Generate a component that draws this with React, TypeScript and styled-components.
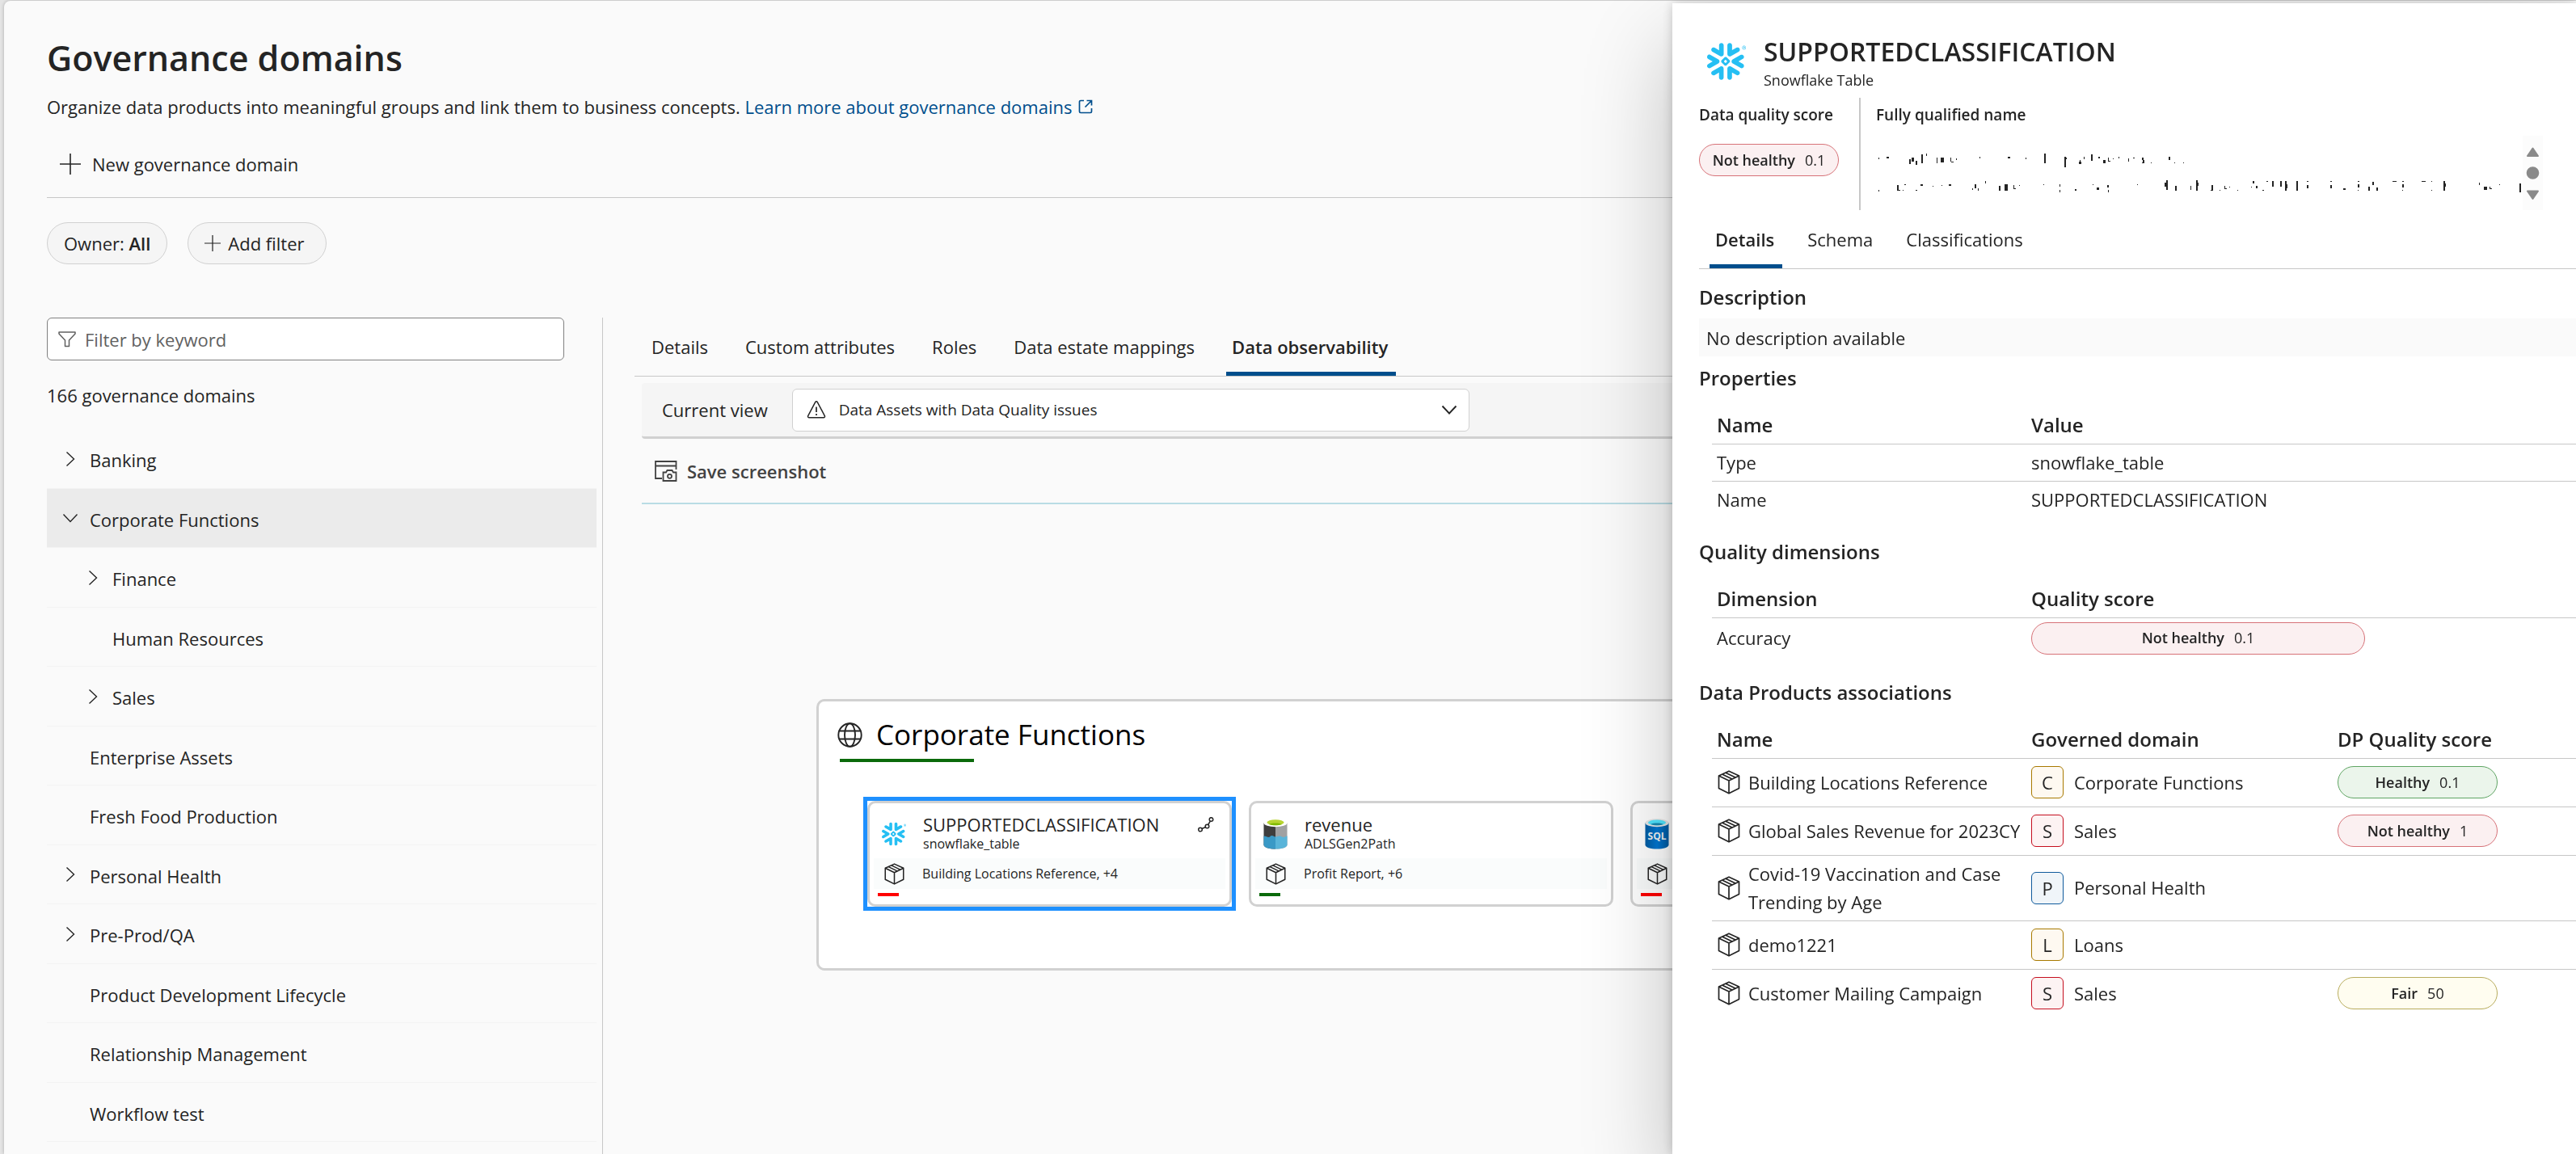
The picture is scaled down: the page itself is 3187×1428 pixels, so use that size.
import React from "react";
import styled, { createGlobalStyle } from "styled-components";
import { SiSnowflake } from "react-icons/si";

const ink = "#242424";
const line = "#c7c7c7";
const brand = "#004e8c";
const snow = "#25bff3";

const GlobalStyle = createGlobalStyle`
  * { box-sizing: border-box; }
  body {
    margin: 0;
    background: #e4e4e4;
    color: ${ink};
    font-family: "Open Sans", "Noto Sans", sans-serif;
    font-size: 22px;
    line-height: 32px;
    overflow: hidden;
  }
  button, input, select { font: inherit; color: inherit; }
  button { background: none; border: 0; padding: 0; cursor: pointer; }
  h1, h2, h3, p, ul { margin: 0; padding: 0; }
  svg { display: block; flex: none; }
`;

/* ---------- icons ---------- */

const PlusIcon = ({ size }: { size: number }) => (
  <svg width={size} height={size} viewBox="0 0 26 26" fill="none" stroke={ink} strokeWidth="1.6">
    <path d="M13 0v26M0 13h26" />
  </svg>
);

const OpenIcon = () => (
  <svg width="18" height="18" viewBox="0 0 18 18" fill="none" stroke={brand} strokeWidth="1.7">
    <path d="M7 1.5H3A1.5 1.5 0 0 0 1.5 3v12A1.5 1.5 0 0 0 3 16.5h12a1.5 1.5 0 0 0 1.5-1.5v-4M10.5 1.5h6v6M16.5 1.5l-8 8" />
  </svg>
);

const FunnelIcon = () => (
  <svg width="22" height="20" viewBox="0 0 22 20" fill="none" stroke="#616161" strokeWidth="1.5">
    <path d="M1 1h20v2l-7.5 8v7.5h-5V11L1 3z" strokeLinejoin="round" />
  </svg>
);

const ChevronIcon = ({ open, stroke = 1.4 }: { open?: boolean; stroke?: number }) => (
  <svg width="20" height="20" viewBox="0 0 20 20" fill="none" stroke={ink} strokeWidth={stroke}>
    <path d={open ? "M1.5 5.5 10 14.5l8.5-9" : "M5.5 1.5 14.5 10l-9 8.5"} />
  </svg>
);

const WarningIcon = () => (
  <svg width="24" height="24" viewBox="0 0 24 24" fill="none" stroke={ink} strokeWidth="1.5" strokeLinejoin="round">
    <path d="M10.7 2.6a1.5 1.5 0 0 1 2.6 0l9 17a1.5 1.5 0 0 1-1.3 2.2H3a1.5 1.5 0 0 1-1.3-2.2z" />
    <path d="M12 8.5v6.5M12 17v2" strokeWidth="1.7" />
  </svg>
);

const ScreenshotIcon = () => (
  <svg width="28" height="26" viewBox="0 0 28 26" fill="none" stroke="#424242" strokeWidth="1.8">
    <path d="M9 22H1V1h25.500v10M1 6.500h25.500" />
    <path d="M10.500 14.500h3.500l1.500-2.500h6l1.500 2.500h3.500V25h-16z" />
    <circle cx="18.500" cy="19.300" r="2.500" />
  </svg>
);

const GlobeIcon = () => (
  <svg width="31" height="31" viewBox="0 0 31 31" fill="none" stroke={ink} strokeWidth="1.9">
    <circle cx="15.500" cy="15.500" r="14.200" />
    <ellipse cx="15.500" cy="15.500" rx="6.500" ry="14.200" />
    <path d="M2.500 10.500h26M2.500 20.500h26" />
  </svg>
);

const BoxIcon = ({ size = 30 }: { size?: number }) => (
  <svg width={size} height={size} viewBox="0 0 30 30" fill="none" stroke={ink} strokeWidth="1.7" strokeLinejoin="round">
    <path d="M15 1.200 27.500 7v15.500L15 28.800 2.500 22.500V7z" />
    <path d="M2.500 7 15 13l12.500-6M15 13v15.800M11 3.200 23 9M7 5.200 19 11" />
  </svg>
);

const LineageIcon = () => (
  <svg width="20" height="19" viewBox="0 0 20 19" fill="none" stroke={ink} strokeWidth="1.5">
    <circle cx="3" cy="15.500" r="2.300" />
    <circle cx="11.500" cy="11.500" r="2.300" />
    <circle cx="16.500" cy="3" r="2.300" />
    <path d="m5 14.500 4.400-2M12.700 9.500l2.600-4.400" />
  </svg>
);

const LakeIcon = () => (
  <svg width="30" height="38" viewBox="0 0 30 38">
    <path d="M.5 5v27.500c0 3 6.500 5 14.500 5V5z" fill="#3e3e3e" />
    <path d="M29.500 5v27.500c0 3-6.500 5-14.500 5V5z" fill="#a0a1a2" />
    <path d="M.5 21.500c3 0 4 1.500 6 1.500s2-2 4-2 2.500 1.500 4.500 1.500v15c-8 0-14.500-2-14.500-5z" fill="#3999c6" />
    <path d="M29.500 21.500c-2 0-2.500 1.500-4.500 1.500s-3-1.500-5-1.500-3 1-5 1v15c8 0 14.500-2 14.500-5z" fill="#59b4d9" />
    <ellipse cx="15" cy="5.300" rx="14.500" ry="5" fill="#fff" />
    <ellipse cx="15" cy="4.700" rx="10.500" ry="3.500" fill="#b8d432" />
    <path d="M7 7c2-1.300 5-1.600 8-1.600s6 .3 8 1.600c-2 1-5 1.300-8 1.300S9 8 7 7z" fill="#7fba00" />
  </svg>
);

const SqlIcon = () => (
  <svg width="30" height="38" viewBox="0 0 30 38">
    <defs>
      <linearGradient id="sql-body" x1="0" x2="1">
        <stop offset="0" stopColor="#005ba1" />
        <stop offset="0.500" stopColor="#0078d4" />
        <stop offset="1" stopColor="#005ba1" />
      </linearGradient>
    </defs>
    <path d="M.5 5v27.500c0 3 6.500 5 14.500 5s14.500-2 14.500-5V5z" fill="url(#sql-body)" />
    <ellipse cx="15" cy="5.300" rx="14.500" ry="5" fill="#e8e8e8" />
    <ellipse cx="15" cy="4.900" rx="11" ry="3.500" fill="#50e6ff" />
    <path d="M7 7c2-1.300 5-1.600 8-1.600s6 .3 8 1.600c-2 1-5 1.300-8 1.300S9 8 7 7z" fill="#198ab3" />
    <text x="15" y="26" textAnchor="middle" fontSize="12" fontWeight="700" fill="#f2f2f2">SQL</text>
  </svg>
);

/* ---------- page shell ---------- */

const Shell = styled.div`
  padding: 1px 0 0 5px;
  height: 100vh;
`;

const Page = styled.main`
  display: flex;
  flex-direction: column;
  height: 100%;
  padding: 41px 0 0 53px;
  background: #fafafa;
  border-radius: 8px 0 0 0;
  box-shadow: 0 0 4px rgba(0, 0, 0, 0.24);
  overflow: hidden;
`;

const PageTitle = styled.h1`
  font-size: 43px;
  font-weight: 600;
  line-height: 60px;
`;

const Intro = styled.p`
  margin-top: 14px;
`;

const Link = styled.a`
  display: inline-flex;
  align-items: center;
  gap: 8px;
  color: ${brand};
  text-decoration: none;
`;

const CommandBar = styled.div`
  display: flex;
  margin-top: 13px;
  height: 84px;
  padding-left: 16px;
  border-bottom: 1px solid ${line};
`;

const Command = styled.button`
  display: flex;
  align-items: center;
  gap: 14px;
`;

const Filters = styled.div`
  display: flex;
  gap: 25px;
  margin-top: 30px;
`;

const FilterPill = styled.button<{ $add?: boolean }>`
  display: flex;
  align-items: center;
  gap: 9px;
  height: 52px;
  padding: 0 ${(p) => (p.$add ? 26 : 20)}px 0 20px;
  border: 1px solid #d1d1d1;
  border-radius: 26px;
  background: #f5f5f5;
  white-space: pre;
`;

const Body = styled.div`
  display: flex;
  flex: 1;
  min-height: 0;
  margin-top: 66px;
`;

/* ---------- domain tree ---------- */

const Sidebar = styled.nav`
  flex: none;
  width: 688px;
  padding-right: 7px;
  border-right: 1px solid ${line};
`;

const SearchBox = styled.label`
  display: flex;
  align-items: center;
  gap: 9px;
  width: 640px;
  height: 53px;
  padding: 0 13px;
  border: 1px solid #808080;
  border-radius: 6px;
  background: #fff;
`;

const SearchInput = styled.input`
  flex: 1;
  border: 0;
  outline: 0;
  background: transparent;
  &::placeholder { color: #616161; opacity: 1; }
`;

const Count = styled.p`
  margin: 27px 0 26px;
`;

const Tree = styled.ul`
  list-style: none;
`;

const TreeItem = styled.li`
  height: 74px;
  border-bottom: 1px solid #f3f3f3;
  &:nth-child(even) { height: 73px; }
`;

const TreeButton = styled.button<{ $level: number; $selected?: boolean }>`
  display: flex;
  align-items: center;
  gap: 14px;
  width: 100%;
  height: 100%;
  padding-left: ${(p) => 19 + p.$level * 28}px;
  background: ${(p) => (p.$selected ? "#ebebeb" : "transparent")};
  text-align: left;
`;

const ChevronSlot = styled.span`
  width: 20px;
`;

const TreeLabel = styled.span`
  padding-top: 3px;
`;

/* ---------- observability view ---------- */

const Content = styled.section`
  flex: 1;
  min-width: 0;
  padding-left: 39px;
`;

const TabList = styled.div<{ $inset: number; $gap: number }>`
  display: flex;
  gap: ${(p) => p.$gap}px;
  padding-left: ${(p) => p.$inset}px;
  border-bottom: 1px solid ${line};
`;

const Tab = styled.button<{ $active?: boolean }>`
  height: 72px;
  padding: 4px 10px 0 7px;
  border-bottom: 5px solid transparent;
  border-image: ${(p) =>
    p.$active ? `linear-gradient(${brand}, ${brand}) 5` : "none"};
  font-weight: ${(p) => (p.$active ? 600 : 400)};
`;

const ViewBar = styled.div`
  display: flex;
  align-items: center;
  gap: 30px;
  height: 69px;
  margin: 8px 0 0 9px;
  padding-left: 25px;
  border-bottom: 3px solid #d1d1d1;
  border-radius: 4px 0 0 4px;
  background: #f5f5f5;
`;

const SelectBox = styled.div`
  display: flex;
  align-items: center;
  gap: 16px;
  width: 838px;
  height: 53px;
  padding: 0 14px 0 17px;
  border: 1px solid #d1d1d1;
  border-radius: 6px;
  background: #fff;
`;

const Select = styled.select`
  flex: 1;
  appearance: none;
  border: 0;
  outline: 0;
  background: transparent;
  font-size: 19px;
`;

const Actions = styled.div`
  display: flex;
  height: 81px;
  margin-left: 9px;
  padding-left: 16px;
  border-bottom: 2px solid #b9dce4;
`;

const SaveButton = styled(Command)`
  gap: 12px;
  color: #424242;
  font-weight: 600;
`;

const Group = styled.section`
  margin: 241px 0 0 225px;
  padding: 17px 0 76px 23px;
  border: 3px solid #d1d1d1;
  border-right: 0;
  border-radius: 10px 0 0 10px;
  background: #fff;
`;

const GroupTitle = styled.h2`
  display: flex;
  align-items: center;
  gap: 17px;
  color: #000;
  font-size: 35px;
  font-weight: 400;
  line-height: 48px;
`;

const Health = styled.div<{ $ok?: boolean; $wide?: boolean }>`
  width: ${(p) => (p.$wide ? 166 : 26)}px;
  height: 4px;
  margin: ${(p) => (p.$wide ? "6px 0 0 3px" : "5px 0 0 10px")};
  background: ${(p) => (p.$ok ? "#0b6a0b" : "#ff0000")};
`;

const Cards = styled.div`
  display: flex;
  gap: 21px;
  margin-top: 48px;
  padding-left: 37px;
`;

const CardFrame = styled.div<{ $selected?: boolean }>`
  flex: none;
  width: 451px;
  outline: ${(p) => (p.$selected ? "5px solid #1e90ff" : "none")};
`;

const Card = styled.article`
  height: 131px;
  border: 3px solid #d1d1d1;
  border-radius: 10px;
  background: #fff;
`;

const CardHead = styled.div`
  display: flex;
  align-items: center;
  gap: 21px;
  height: 68px;
  padding: 8px 19px 0 15px;
`;

const CardText = styled.div`
  flex: 1;
  padding-bottom: 4px;
  line-height: 28px;
`;

const CardKind = styled.div`
  font-size: 16px;
  line-height: 20px;
`;

const CardMark = styled.div`
  align-self: flex-start;
  padding-top: 9px;
`;

const CardBand = styled.div`
  display: flex;
  align-items: center;
  gap: 21px;
  height: 38px;
  margin: 0 5px;
  padding-left: 12px;
  background: #fafcfc;
  font-size: 16px;
`;

/* ---------- details drawer ---------- */

const Drawer = styled.aside`
  position: fixed;
  top: 4px;
  right: 0;
  bottom: 0;
  width: 1118px;
  padding: 37px 0 0 33px;
  background: #fff;
  box-shadow: 0 0 13px rgba(0, 0, 0, 0.2), 0 52px 104px rgba(0, 0, 0, 0.24);
`;

const DrawerHead = styled.header`
  display: flex;
  align-items: center;
  gap: 22px;
  padding-left: 10px;
`;

const DrawerTitle = styled.h2`
  font-size: 32px;
  font-weight: 600;
  line-height: 46px;
`;

const DrawerKind = styled.p`
  font-size: 18px;
  line-height: 24px;
`;

const Summary = styled.div`
  display: flex;
  height: 139px;
  margin-top: 10px;
`;

const SummaryScore = styled.div`
  width: 200px;
  padding-top: 7px;
  border-right: 2px solid ${line};
`;

const SummaryName = styled.div`
  padding: 7px 0 0 19px;
`;

const SummaryLabel = styled.h3`
  font-size: 19px;
  font-weight: 600;
  line-height: 28px;
`;

const tones = {
  bad: ["#fbf0f1", "#d77278"],
  good: ["#ebf5eb", "#5fa563"],
  fair: ["#fffdf0", "#b8ac5c"],
};
type Tone = keyof typeof tones;

const Pill = styled.span<{ $tone: Tone; $width: string }>`
  display: flex;
  align-items: center;
  justify-content: center;
  gap: 12px;
  width: ${(p) => p.$width};
  height: 40px;
  border: 1px solid ${(p) => tones[p.$tone][1]};
  border-radius: 20px;
  background: ${(p) => tones[p.$tone][0]};
  font-size: 18px;
`;

const SummaryPill = styled(Pill)`
  margin-top: 22px;
`;

const NameScroller = styled.div`
  display: flex;
  margin-top: 12px;
`;

const Sections = styled.div`
  padding-top: 18px;
`;

const Section = styled.section`
  & + & { margin-top: 25px; }
`;

const SectionTitle = styled.h3`
  font-size: 24px;
  font-weight: 600;
  line-height: 34px;
`;

const Description = styled.p`
  height: 47px;
  margin: 9px 0 10px;
  padding-left: 9px;
  background: #fafafa;
  line-height: 49px;
`;

const Table = styled.table`
  width: calc(100% - 16px);
  margin: 17px 0 0 16px;
  border-collapse: collapse;
  table-layout: fixed;
  line-height: 35px;
  th, td { padding: 0 0 0 6px; text-align: left; }
  th { height: 47px; padding-top: 1px; font-size: 24px; font-weight: 600; }
  tr + tr td { border-top: 1px solid ${line}; }
  thead { border-bottom: 1px solid ${line}; }
`;

const Col = styled.col<{ $width?: number }>`
  width: ${(p) => (p.$width ? `${p.$width}px` : "auto")};
`;

const Row = styled.tr<{ $height: number }>`
  height: ${(p) => p.$height}px;
`;

const Cell = styled.div<{ $gap: number }>`
  display: flex;
  align-items: center;
  gap: ${(p) => p.$gap}px;
  padding: 5px 0;
`;

const tiles: Record<string, [string, string]> = {
  gold: ["#fef9f1", "#a87900"],
  red: ["#fdf3f3", "#c50f1f"],
  blue: ["#f0f5f9", "#0f5a9c"],
};

const Tile = styled.span<{ $tone: string }>`
  flex: none;
  width: 40px;
  height: 40px;
  border: 1px solid ${(p) => tiles[p.$tone][1]};
  border-radius: 6px;
  background: ${(p) => tiles[p.$tone][0]};
  line-height: 38px;
  text-align: center;
`;

const Strong = styled.b`
  font-weight: 600;
`;

/* ---------- data ---------- */

const domains: { name: string; level: number; state?: "open" | "closed" }[] = [
  { name: "Banking", level: 0, state: "closed" },
  { name: "Corporate Functions", level: 0, state: "open" },
  { name: "Finance", level: 1, state: "closed" },
  { name: "Human Resources", level: 1 },
  { name: "Sales", level: 1, state: "closed" },
  { name: "Enterprise Assets", level: 0 },
  { name: "Fresh Food Production", level: 0 },
  { name: "Personal Health", level: 0, state: "closed" },
  { name: "Pre-Prod/QA", level: 0, state: "closed" },
  { name: "Product Development Lifecycle", level: 0 },
  { name: "Relationship Management", level: 0 },
  { name: "Workflow test", level: 0 },
];

const tabs = ["Details", "Custom attributes", "Roles", "Data estate mappings", "Data observability"];

const products: { name: string; domain: string; tile: string; score?: [string, string, Tone] }[] = [
  { name: "Building Locations Reference", domain: "Corporate Functions", tile: "gold", score: ["Healthy", "0.1", "good"] },
  { name: "Global Sales Revenue for 2023CY", domain: "Sales", tile: "red", score: ["Not healthy", "1", "bad"] },
  { name: "Covid-19 Vaccination and Case Trending by Age", domain: "Personal Health", tile: "blue" },
  { name: "demo1221", domain: "Loans", tile: "gold" },
  { name: "Customer Mailing Campaign", domain: "Sales", tile: "red", score: ["Fair", "50", "fair"] },
];

// Traces left of the masked name: x, y, width, height of each fleck.
const flecks = `3 27 1 2,13 26 3 2,41 29 2 6,44 27 3 5,49 31 2 5,56 23 2 11,62 22 1 3,75 27 1 7,80 27 4 6,92 27 1 5,93 32 3 1,99 28 1 2,128 26 1 2,163 26 3 2,185 27 1 2,208 22 2 12,233 26 2 13,235 27 1 2,252 30 1 5,251 32 3 3,257 26 1 3,266 23 2 8,275 26 2 2,281 30 3 4,287 27 1 5,288 31 2 1,293 28 1 1,300 26 1 2,312 28 1 4,318 27 2 1,329 27 2 3,330 30 2 3,329 33 3 1,340 33 1 1,362 26 2 4,369 33 1 1,380 33 1 1,3 67 1 2,26 61 2 7,28 67 2 1,33 67 1 1,35 60 2 1,49 67 2 1,55 60 3 2,70 62 1 1,81 61 1 1,90 60 3 2,119 65 1 2,122 60 2 5,126 65 1 3,135 56 1 3,152 62 2 6,159 60 4 8,170 61 1 4,170 65 3 1,177 61 1 1,207 60 1 1,227 60 1 3,227 67 1 3,246 66 2 2,268 60 1 1,273 64 3 3,286 61 2 3,287 67 1 3,323 60 1 1,359 55 2 12,357 58 2 5,370 62 2 6,389 62 1 5,396 55 2 13,398 58 1 4,415 61 2 6,414 67 3 1,425 67 1 1,431 62 1 4,432 65 2 1,437 63 1 1,447 67 1 1,464 63 1 1,466 56 2 3,470 62 2 3,478 67 2 1,483 56 2 1,490 56 2 7,500 56 2 7,506 56 2 12,508 60 1 5,520 56 2 12,533 56 2 1,533 61 2 4,562 56 2 1,562 61 2 4,578 65 3 2,596 56 2 1,596 60 2 4,596 67 1 1,609 63 2 5,614 57 2 4,619 64 2 4,639 56 5 1,651 56 2 1,651 60 2 4,651 67 1 1,675 56 5 1,687 56 1 1,687 67 1 1,702 56 2 12,704 59 1 4,746 58 1 3,752 63 4 4,759 63 1 3,760 65 2 1,771 60 1 1,796 59 2 11`
  .split(",")
  .map((f) => f.trim().split(" ").map(Number));

const MaskedName = () => (
  <svg width="800" height="92" viewBox="0 0 800 92" fill={ink} aria-hidden="true">
    {flecks.map(([x, y, w, h]) => (
      <rect key={`${x}-${y}`} x={x} y={y} width={w} height={h} />
    ))}
  </svg>
);

const ScrollIcon = () => (
  <svg width="25" height="92" viewBox="0 0 25 92">
    <path d="M0 0h25v92H0z" fill="#fcfcfc" />
    <g fill="#8a8a8a" stroke="#8a8a8a" strokeWidth="2" strokeLinejoin="round">
      <path d="M12.500 15.500 19 25H6z" />
      <path d="M12.500 78 19 68.500H6z" />
      <circle cx="12.500" cy="46" r="6.800" />
    </g>
  </svg>
);

export default function App() {
  return (
    <Shell>
      <GlobalStyle />
      <Page>
        <PageTitle>Governance domains</PageTitle>
        <Intro>
          Organize data products into meaningful groups and link them to business concepts.{" "}
          <Link href="#learn">
            Learn more about governance domains <OpenIcon />
          </Link>
        </Intro>
        <CommandBar>
          <Command type="button">
            <PlusIcon size={26} />
            New governance domain
          </Command>
        </CommandBar>
        <Filters>
          <FilterPill type="button">
            <span>Owner: <Strong>All</Strong></span>
          </FilterPill>
          <FilterPill type="button" $add>
            <PlusIcon size={20} />
            Add filter
          </FilterPill>
        </Filters>
        <Body>
          <Sidebar>
            <SearchBox>
              <FunnelIcon />
              <SearchInput type="text" placeholder="Filter by keyword" aria-label="Filter by keyword" />
            </SearchBox>
            <Count>166 governance domains</Count>
            <Tree>
              {domains.map((d) => (
                <TreeItem key={d.name}>
                  <TreeButton type="button" $level={d.level} $selected={d.state === "open"}>
                    <ChevronSlot>{d.state && <ChevronIcon open={d.state === "open"} />}</ChevronSlot>
                    <TreeLabel>{d.name}</TreeLabel>
                  </TreeButton>
                </TreeItem>
              ))}
            </Tree>
          </Sidebar>
          <Content>
            <TabList $inset={14} $gap={29} role="tablist">
              {tabs.map((t) => (
                <Tab key={t} type="button" role="tab" $active={t === "Data observability"}>
                  {t}
                </Tab>
              ))}
            </TabList>
            <ViewBar>
              <label htmlFor="view">Current view</label>
              <SelectBox>
                <WarningIcon />
                <Select id="view">
                  <option>Data Assets with Data Quality issues</option>
                </Select>
                <ChevronIcon open stroke={1.9} />
              </SelectBox>
            </ViewBar>
            <Actions>
              <SaveButton type="button">
                <ScreenshotIcon />
                Save screenshot
              </SaveButton>
            </Actions>
            <Group>
              <GroupTitle>
                <GlobeIcon />
                Corporate Functions
              </GroupTitle>
              <Health $ok $wide />
              <Cards>
                <CardFrame $selected>
                  <Card>
                    <CardHead>
                      <SiSnowflake size={30} color={snow} />
                      <CardText>
                        SUPPORTEDCLASSIFICATION
                        <CardKind>snowflake_table</CardKind>
                      </CardText>
                      <CardMark><LineageIcon /></CardMark>
                    </CardHead>
                    <CardBand>
                      <BoxIcon size={27} />
                      Building Locations Reference, +4
                    </CardBand>
                    <Health />
                  </Card>
                </CardFrame>
                <CardFrame>
                  <Card>
                    <CardHead>
                      <LakeIcon />
                      <CardText>
                        revenue
                        <CardKind>ADLSGen2Path</CardKind>
                      </CardText>
                    </CardHead>
                    <CardBand>
                      <BoxIcon size={27} />
                      Profit Report, +6
                    </CardBand>
                    <Health $ok />
                  </Card>
                </CardFrame>
                <CardFrame>
                  <Card>
                    <CardHead><SqlIcon /></CardHead>
                    <CardBand><BoxIcon size={27} /></CardBand>
                    <Health />
                  </Card>
                </CardFrame>
              </Cards>
            </Group>
          </Content>
        </Body>
      </Page>

      <Drawer>
        <DrawerHead>
          <SiSnowflake size={48} color={snow} />
          <div>
            <DrawerTitle>SUPPORTEDCLASSIFICATION</DrawerTitle>
            <DrawerKind>Snowflake Table</DrawerKind>
          </div>
        </DrawerHead>
        <Summary>
          <SummaryScore>
            <SummaryLabel>Data quality score</SummaryLabel>
            <SummaryPill $tone="bad" $width="173px"><Strong>Not healthy</Strong>0.1</SummaryPill>
          </SummaryScore>
          <SummaryName>
            <SummaryLabel>Fully qualified name</SummaryLabel>
            <NameScroller>
              <MaskedName />
              <ScrollIcon />
            </NameScroller>
          </SummaryName>
        </Summary>
        <TabList $inset={13} $gap={24} role="tablist">
          <Tab type="button" role="tab" $active>Details</Tab>
          <Tab type="button" role="tab">Schema</Tab>
          <Tab type="button" role="tab">Classifications</Tab>
        </TabList>
        <Sections>
          <SectionTitle>Description</SectionTitle>
          <Description>No description available</Description>
          <Section>
            <SectionTitle>Properties</SectionTitle>
            <Table>
              <colgroup><Col $width={389} /><Col /></colgroup>
              <thead><tr><th>Name</th><th>Value</th></tr></thead>
              <tbody>
                <Row $height={46}><td>Type</td><td>snowflake_table</td></Row>
                <Row $height={46}><td>Name</td><td>SUPPORTEDCLASSIFICATION</td></Row>
              </tbody>
            </Table>
          </Section>
          <Section>
            <SectionTitle>Quality dimensions</SectionTitle>
            <Table>
              <colgroup><Col $width={389} /><Col /></colgroup>
              <thead><tr><th>Dimension</th><th>Quality score</th></tr></thead>
              <tbody>
                <Row $height={51}>
                  <td>Accuracy</td>
                  <td><Pill $tone="bad" $width="413px"><Strong>Not healthy</Strong>0.1</Pill></td>
                </Row>
              </tbody>
            </Table>
          </Section>
          <Section>
            <SectionTitle>Data Products associations</SectionTitle>
            <Table>
              <colgroup><Col $width={389} /><Col $width={379} /><Col /></colgroup>
              <thead><tr><th>Name</th><th>Governed domain</th><th>DP Quality score</th></tr></thead>
              <tbody>
                {products.map((p) => (
                  <Row key={p.name} $height={60}>
                    <td><Cell $gap={9}><BoxIcon />{p.name}</Cell></td>
                    <td><Cell $gap={13}><Tile $tone={p.tile}>{p.domain[0]}</Tile>{p.domain}</Cell></td>
                    <td>
                      {p.score && (
                        <Pill $tone={p.score[2]} $width="198px"><Strong>{p.score[0]}</Strong>{p.score[1]}</Pill>
                      )}
                    </td>
                  </Row>
                ))}
              </tbody>
            </Table>
          </Section>
        </Sections>
      </Drawer>
    </Shell>
  );
}
